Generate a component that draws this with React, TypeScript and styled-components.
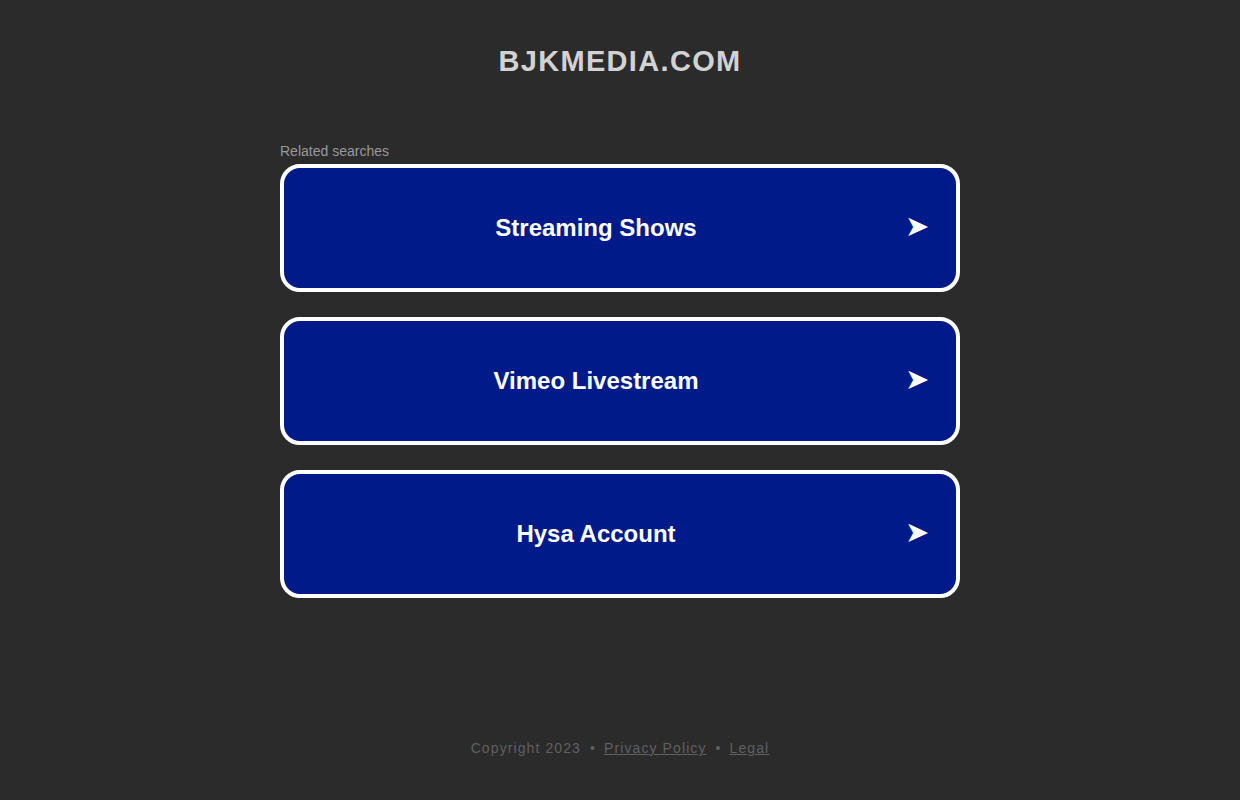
import React from "react";
import styled, { createGlobalStyle } from "styled-components";

const GlobalStyle = createGlobalStyle`
  html, body {
    margin: 0;
    padding: 0;
    background: #2b2b2b;
    font-family: "Liberation Sans", Arial, sans-serif;
  }
`;

const Page = styled.div`
  display: flex;
  flex-direction: column;
  align-items: center;
  min-height: 800px;
`;

const Title = styled.h1`
  margin: 44px 0 0;
  font-size: 29px;
  line-height: 34px;
  font-weight: bold;
  letter-spacing: 1.33px;
  color: #d2d2d2;
`;

const Searches = styled.div`
  width: 680px;
  margin-top: 65px;
  display: flex;
  flex-direction: column;
`;

const Label = styled.div`
  font-size: 14px;
  line-height: 16px;
  color: #999999;
  margin-bottom: 5px;
`;

const List = styled.div`
  display: flex;
  flex-direction: column;
  gap: 25px;
`;

const Card = styled.a`
  display: flex;
  align-items: center;
  height: 120px;
  border: 4px solid #ffffff;
  border-radius: 20px;
  background: #001a8a;
  color: #ffffff;
  text-decoration: none;
  cursor: pointer;
`;

const CardText = styled.span`
  flex: 1;
  text-align: center;
  font-size: 24px;
  font-weight: bold;
`;

const Arrow = styled.span`
  width: 51px;
  margin-left: -3px;
  margin-top: -3px;
  font-size: 29px;
  line-height: 1;
`;

const Footer = styled.footer`
  margin-top: 142px;
  font-size: 14px;
  line-height: 16px;
  letter-spacing: 1.1px;
  color: #606060;

  & a {
    color: #606060;
  }
`;

const Dot = styled.span`
  margin: 0 8px 0 9px;
`;

const items = ["Streaming Shows", "Vimeo Livestream", "Hysa Account"];

const App = () => {
  return (
    <>
      <GlobalStyle />
      <Page>
        <Title>BJKMEDIA.COM</Title>
        <Searches>
          <Label>Related searches</Label>
          <List>
            {items.map((item) => (
              <Card key={item}>
                <CardText>{item}</CardText>
                <Arrow>➤</Arrow>
              </Card>
            ))}
          </List>
        </Searches>
        <Footer>
          Copyright 2023<Dot>•</Dot>
          <a href="#">Privacy Policy</a>
          <Dot>•</Dot>
          <a href="#">Legal</a>
        </Footer>
      </Page>
    </>
  );
};

export default App;
